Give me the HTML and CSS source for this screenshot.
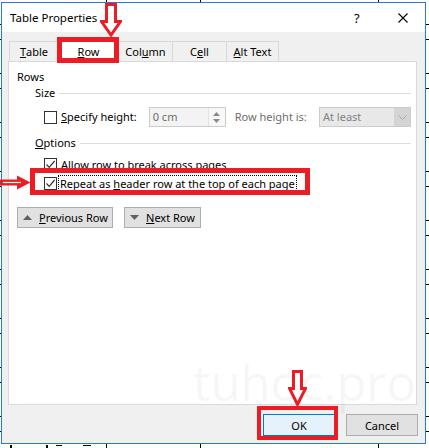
FILE: index.html
```html
<!DOCTYPE html>
<html lang="en">
<head>
  <meta charset="utf-8">
  <title>Table Properties</title>
  <link rel="stylesheet" href="styles.css">
</head>
<body>
<div class="screen">
  <div class="dialog">
    <div class="titlebar">
      <span class="title">Table Properties</span>
      <span class="help">?</span>
      <svg class="close" width="10" height="10" viewBox="0 0 10 10"><path d="M0.5 0.5L9.5 9.5M9.5 0.5L0.5 9.5" stroke="#000" stroke-width="1.1" fill="none"/></svg>
    </div>

    <div class="dlg-body">
      <div class="tabs">
        <div class="tab t-table"><u>T</u>able</div>
        <div class="tab t-row active"><u>R</u>ow</div>
        <div class="tab t-col">Col<u>u</u>mn</div>
        <div class="tab t-cell">C<u>e</u>ll</div>
        <div class="tab t-alt"><u>A</u>lt Text</div>
      </div>

      <div class="panel">
        <div class="heading">Rows</div>

        <div class="group-head"><span>Size</span><span class="rule"></span></div>
        <div class="size-row">
          <div class="check">
            <span class="box"></span>
            <span class="label"><u>S</u>pecify height:</span>
          </div>
          <div class="spin">
            <span class="val">0 cm</span>
            <span class="spin-btns">
              <svg width="7" height="4" viewBox="0 0 7 4"><path d="M3.5 0L7 4H0Z" fill="#8a8a8a"/></svg>
              <svg width="7" height="4" viewBox="0 0 7 4"><path d="M0 0H7L3.5 4Z" fill="#8a8a8a"/></svg>
            </span>
          </div>
          <span class="muted rh-label">Row height is:</span>
          <div class="select">
            <span class="val">At least</span>
            <span class="drop"><svg width="9" height="5" viewBox="0 0 9 5"><path d="M0.5 0.5L4.5 4.5L8.5 0.5" stroke="#a6a6a6" fill="none"/></svg></span>
          </div>
        </div>

        <div class="group-head options"><span><u>O</u>ptions</span><span class="rule"></span></div>
        <div class="opt">
          <div class="check">
            <span class="box"><svg width="11" height="11" viewBox="0 0 11 11"><path d="M1.5 5.5L4.2 8.3L9.6 2" stroke="#333" stroke-width="1.2" fill="none"/></svg></span>
            <span class="label">Allow row to brea<u>k</u> across pages</span>
          </div>
        </div>
        <div class="opt">
          <div class="check">
            <span class="box"><svg width="11" height="11" viewBox="0 0 11 11"><path d="M1.5 5.5L4.2 8.3L9.6 2" stroke="#333" stroke-width="1.2" fill="none"/></svg></span>
            <span class="label focus">Repeat as <u>h</u>eader row at the top of each page</span>
          </div>
        </div>

        <div class="nav">
          <button class="btn nav-btn prev">
            <svg width="9" height="5" viewBox="0 0 9 5"><path d="M4.5 0L9 5H0Z" fill="#616161"/></svg>
            <span><u>P</u>revious Row</span>
          </button>
          <button class="btn nav-btn next">
            <svg width="9" height="5" viewBox="0 0 9 5"><path d="M0 0H9L4.5 5Z" fill="#616161"/></svg>
            <span><u>N</u>ext Row</span>
          </button>
        </div>
      </div>

      <div class="footer">
        <button class="btn default">OK</button>
        <button class="btn">Cancel</button>
      </div>
    </div>
  </div>

  <div class="watermark">tuhoc.pro</div>

  <!-- annotations drawn over the screenshot -->
  <div class="mark mark-row"></div>
  <div class="mark mark-opt"></div>
  <div class="mark mark-ok"></div>

  <svg class="arrow arrow-top" width="22" height="34" viewBox="0 0 22 34">
    <path d="M6.5 1.5H15.5V18.5H20.5L11 32L1.5 18.5H6.5Z" fill="#fff" stroke="#ec1c24" stroke-width="3" stroke-linejoin="miter"/>
  </svg>
  <svg class="arrow arrow-left" width="31" height="15" viewBox="0 0 31 15">
    <path d="M0 4.5H17V0.5L30.5 7.5L17 14.5V10.5H0Z" fill="#ec1c24"/>
    <path d="M3 7.5H21" stroke="#fff" stroke-width="1.2"/>
  </svg>
  <svg class="arrow arrow-ok" width="19" height="37" viewBox="0 0 19 37">
    <path d="M5.5 1.5H13.5V18.5H17.5L9.5 34.5L1.5 18.5H5.5Z" fill="#fff" fill-opacity="0.7" stroke="#ec1c24" stroke-width="3"/>
  </svg>
</div>
</body>
</html>
```

FILE: styles.css
```css
html, body {
  margin: 0;
  padding: 0;
}

body {
  width: 429px;
  height: 448px;
  overflow: hidden;
  background: #fff;
  font-family: "Noto Sans", "Open Sans", sans-serif;
  font-size: 11px;
  color: #000;
  white-space: nowrap;
}

/* the Word document peeking out behind the dialog */
.screen {
  position: relative;
  width: 429px;
  height: 448px;
  padding: 2px 0 0 1px;
  box-sizing: border-box;
  background:
    linear-gradient(#000, #000) 106px 0 / 1px 448px no-repeat,
    linear-gradient(#000, #000) 200px 0 / 1px 448px no-repeat,
    linear-gradient(#000, #000) 378px 0 / 1px 448px no-repeat,
    linear-gradient(#000, #000) 10px 445px / 2px 3px no-repeat,
    linear-gradient(#000, #000) 46px 445px / 2px 3px no-repeat,
    linear-gradient(#000, #000) 56px 445px / 6px 1px no-repeat,
    linear-gradient(#000, #000) 83px 445px / 8px 1px no-repeat,
    repeating-linear-gradient(to bottom, #000 0 1px, transparent 1px 15px, #000 15px 16px, transparent 16px 49px) 0 24px / 429px 49px;
  background-color: #fff;
  overflow: hidden;
}

.dialog {
  width: 425px;
  height: 442px;
  box-sizing: border-box;
  border: 1px solid #2b7ad2;
  background: #f0f0f0;
  display: flex;
  flex-direction: column;
}

.titlebar {
  height: 29px;
  flex: none;
  background: #fff;
  display: flex;
  align-items: center;
  padding: 0 17px 0 8px;
}
.title { font-size: 11.5px; }
.help { margin-left: auto; width: 6px; font-size: 13px; }
.close { margin-left: 38px; }

.dlg-body {
  flex: 1;
  padding: 7px 8px 6px 6px;
  display: flex;
  flex-direction: column;
}

/* tabs */
.tabs {
  height: 22px;
  display: flex;
  align-items: flex-end;
  padding-left: 1px;
}
.tab {
  height: 20px;
  box-sizing: border-box;
  border: 1px solid #d9d9d9;
  border-bottom: 0;
  margin-right: -1px;
  display: flex;
  align-items: center;
  justify-content: center;
  background: #f0f0f0;
}
.tab.active {
  height: 23px;
  margin-bottom: -1px;
  background: #fff;
  position: relative;
  z-index: 1;
}
.t-table { width: 50px; }
.t-row { width: 61px; }
.t-col { width: 55px; }
.t-cell { width: 55px; }
.t-alt { width: 53px; }

.panel {
  height: 344px;
  box-sizing: border-box;
  border: 1px solid #d9d9d9;
  background: #fff;
  padding: 7px 5px 0 8px;
  line-height: 16px;
}

.group-head {
  display: flex;
  align-items: center;
  margin-left: 18px;
}
.group-head .rule {
  flex: 1;
  height: 1px;
  background: #dcdcdc;
  margin-left: 4px;
}
.group-head.options { margin-top: 8px; }

.check {
  display: flex;
  align-items: center;
}
.box {
  width: 13px;
  height: 13px;
  box-sizing: border-box;
  border: 1px solid #333;
  background: #fff;
  display: flex;
  align-items: center;
  justify-content: center;
  margin-right: 4px;
  flex: none;
}
.focus {
  outline: 1px dotted #000;
  outline-offset: 0;
  padding: 0 1px;
  margin-left: -2px;
}

.size-row {
  margin-top: 6px;
  height: 20px;
  padding-left: 27px;
  display: flex;
  align-items: center;
}
.spin {
  width: 77px;
  height: 20px;
  box-sizing: border-box;
  margin-left: 12px;
  border: 1px solid #cccccc;
  background: #f3f3f3;
  display: flex;
  align-items: center;
  color: #6d6d6d;
}
.spin .val { flex: 1; padding-left: 3px; }
.spin-btns {
  width: 16px;
  height: 18px;
  border-left: 1px solid #e3e3e3;
  background: #f7f7f7;
  display: flex;
  flex-direction: column;
  align-items: center;
  justify-content: center;
  gap: 3px;
}
.spin-btns svg { display: block; }

.muted { color: #6d6d6d; }
.rh-label { margin-left: 9px; }

.select {
  width: 92px;
  height: 20px;
  box-sizing: border-box;
  margin-left: auto;
  border: 1px solid #cccccc;
  background: #e8e8e8;
  display: flex;
  align-items: center;
  color: #838383;
}
.select .val { flex: 1; padding-left: 3px; }
.select .drop {
  width: 16px;
  height: 18px;
  background: #d4d4d4;
  display: flex;
  align-items: center;
  justify-content: center;
}

.opt {
  height: 19px;
  padding-left: 27px;
  display: flex;
  align-items: center;
}
.group-head.options + .opt { margin-top: 4px; }

.btn {
  font: inherit;
  color: #000;
  height: 22px;
  box-sizing: border-box;
  border: 1px solid #adadad;
  background: #e1e1e1;
  padding: 0;
  display: flex;
  align-items: center;
  justify-content: center;
}
.btn.default {
  border-color: #0078d7;
  background: #e5f1fb;
}

.nav {
  margin-top: 14px;
  display: flex;
  gap: 11px;
}
.nav-btn {
  height: 21px;
  justify-content: flex-start;
  padding-left: 5px;
  gap: 7px;
}
.nav-btn.prev { width: 96px; }
.nav-btn.next { width: 77px; }

.footer {
  margin-top: 9px;
  display: flex;
  justify-content: flex-end;
  gap: 11px;
  margin-right: -1px;
}
.footer .btn { width: 72px; }

.watermark {
  position: absolute;
  left: 193px;
  top: 358px;
  font-family: "Open Sans", sans-serif;
  font-size: 49px;
  line-height: 49px;
  color: rgba(0, 0, 0, 0.035);
  pointer-events: none;
}

/* red annotation marks */
.mark {
  position: absolute;
  z-index: 2;
  border: 5px solid #ec1c24;
  box-sizing: border-box;
}
.mark-row { left: 57px; top: 37px; width: 62px; height: 26px; }
.mark-opt { left: 30px; top: 168px; width: 280px; height: 27px; }
.mark-ok { left: 257px; top: 406px; width: 81px; height: 34px; border-width: 4px; }

.arrow { position: absolute; z-index: 3; }
.arrow-top { left: 100px; top: 3px; }
.arrow-left { left: 0; top: 175px; }
.arrow-ok { left: 288px; top: 370px; }
```
